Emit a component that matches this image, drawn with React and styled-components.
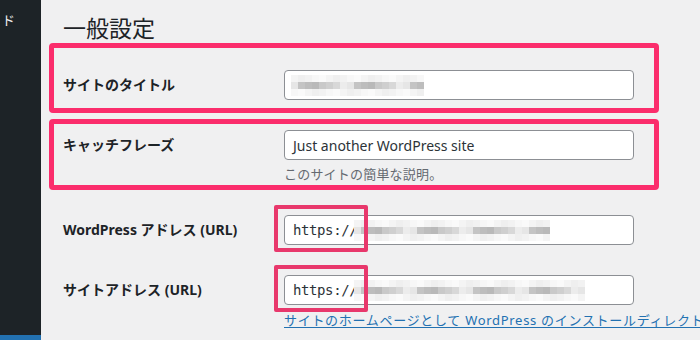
import styled, { createGlobalStyle } from 'styled-components';

const GlobalStyle = createGlobalStyle`
  html, body {
    margin: 0;
    padding: 0;
    background: #f0f0f1;
  }
  body {
    font-family: "Noto Sans", "Noto Sans CJK JP", sans-serif;
    color: #1d2327;
  }
`;

const Page = styled.div`
  display: flex;
  width: 700px;
  height: 340px;
  overflow: hidden;
`;

const Sidebar = styled.nav`
  display: flex;
  flex-direction: column;
  justify-content: space-between;
  flex: 0 0 41px;
  background: #1d2327;
`;

const MenuItem = styled.div`
  padding: 11px 0 0 2px;
  color: #f0f0f1;
  font-size: 13px;
  line-height: 18px;
  white-space: nowrap;
  overflow: hidden;
`;

const ActiveStrip = styled.div`
  height: 5px;
  background: #2271b1;
`;

const Main = styled.main`
  flex: 1;
  min-width: 0;
  padding: 0 0 0 8px;
  overflow: hidden;
`;

const Title = styled.h1`
  margin: 0;
  padding: 13px 0 0 14px;
  font-size: 23px;
  font-weight: 400;
  line-height: 30px;
  color: #1d2327;
`;

const Highlight = styled.div`
  width: 610px;
  box-sizing: border-box;
  border: 5px solid #fb2d6c;
  border-radius: 4px;
  margin-bottom: 6px;
`;

const Row = styled.div`
  display: grid;
  grid-template-columns: 221px 350px;
  align-items: start;
  padding: ${({ $pad }) => $pad};
`;

const Label = styled.label`
  font-size: 14px;
  font-weight: 700;
  line-height: 30px;
  white-space: nowrap;
`;

const Field = styled.div`
  display: flex;
  flex-direction: column;
  position: relative;
`;

const Input = styled.div`
  display: flex;
  align-items: center;
  height: 30px;
  box-sizing: border-box;
  padding: 0 8px;
  background: #fff;
  border: 1px solid #8c8f94;
  border-radius: 4px;
  font-size: 14px;
  color: #2c3338;
  white-space: nowrap;
  overflow: hidden;
`;

const Mono = styled.span`
  font-family: "DejaVu Sans Mono", "Liberation Mono", monospace;
  font-size: 14px;
  letter-spacing: -0.4px;
  color: #2c3338;
`;

const Mosaic = styled.div`
  display: grid;
  grid-template-columns: repeat(${({ $cols }) => $cols}, 7px);
  grid-auto-rows: 7px;
  margin-left: ${({ $offset }) => $offset}px;
`;

const Cell = styled.span`
  background: ${({ $shade }) => $shade};
`;

const Description = styled.p`
  margin: 5px 0 0;
  font-size: 13px;
  line-height: 18px;
  letter-spacing: 0.2px;
  color: #646970;
  white-space: nowrap;
`;

const Callout = styled.div`
  position: absolute;
  left: -10px;
  top: -10px;
  width: 94px;
  height: 47px;
  box-sizing: border-box;
  border: 4px solid #e8386c;
  border-radius: 2px;
  pointer-events: none;
`;

const HelpLink = styled.a`
  display: block;
  margin-top: 6px;
  font-size: 13px;
  line-height: 18px;
  letter-spacing: 0.7px;
  color: #2271b1;
  text-decoration: underline;
  text-underline-offset: 2px;
  white-space: nowrap;
`;

const shadeFor = (i, row) => {
  if (row !== 1) {
    const light = ['#f4f4f4', '#f7f7f7', '#efefef', '#fafafa', '#f2f2f2'];
    return light[(i * 7 + row * 3) % light.length];
  }
  const mid = ['#c4c4c4', '#d8d8d8', '#b9b9b9', '#e6e6e6', '#cfcfcf', '#bdbdbd', '#ececec', '#c9c9c9'];
  return mid[(i * 5 + 3) % mid.length];
};

const Blurred = ({ cols, offset = 0 }) => (
  <Mosaic $cols={cols} $offset={offset}>
    {[0, 1, 2].flatMap((row) =>
      Array.from({ length: cols }, (_, i) => <Cell key={`${row}-${i}`} $shade={shadeFor(i, row)} />)
    )}
  </Mosaic>
);

const App = () => (
  <Page>
    <GlobalStyle />
    <Sidebar>
      <MenuItem>ド</MenuItem>
      <ActiveStrip />
    </Sidebar>

    <Main>
      <Title>一般設定</Title>

      <Highlight>
        <Row $pad="22px 0 8px 9px">
          <Label>サイトのタイトル</Label>
          <Field>
            <Input>
              <Blurred cols={19} offset={-2} />
            </Input>
          </Field>
        </Row>
      </Highlight>

      <Highlight>
        <Row $pad="6px 0 2px 9px">
          <Label>キャッチフレーズ</Label>
          <Field>
            <Input>Just another WordPress site</Input>
            <Description>このサイトの簡単な説明。</Description>
          </Field>
        </Row>
      </Highlight>

      <Row $pad="19px 0 15px 14px">
        <Label>WordPress アドレス (URL)</Label>
        <Field>
          <Input>
            <Mono>https://</Mono>
            <Blurred cols={28} offset={-3} />
          </Input>
          <Callout />
        </Field>
      </Row>

      <Row $pad="15px 0 0 14px">
        <Label>サイトアドレス (URL)</Label>
        <Field>
          <Input>
            <Mono>https://</Mono>
            <Blurred cols={33} offset={-3} />
          </Input>
          <Callout />
          <HelpLink href="#">
            サイトのホームページとして WordPress のインストールディレクトリとは異なる場所を設定する場合は、ここにアドレスを入力してください。
          </HelpLink>
        </Field>
      </Row>
    </Main>
  </Page>
);

export default App;
